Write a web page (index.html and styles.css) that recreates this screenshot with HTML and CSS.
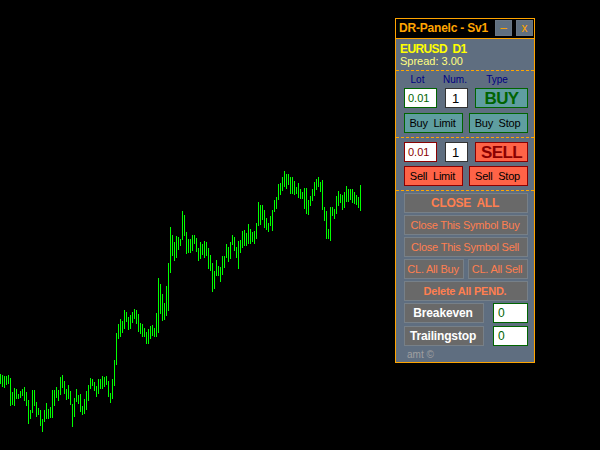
FILE: index.html
```html
<!DOCTYPE html>
<html lang="en">
<head>
<meta charset="utf-8">
<title>DR-Panelc</title>
<link rel="stylesheet" href="styles.css">
</head>
<body>
<svg class="chart" width="600" height="450" viewBox="0 0 600 450" aria-hidden="true">
<path class="bars" d="M.5 374V384M2.5 375V387M4.5 376V388M6.5 376V385M8.5 375V384M10.5 378V406M12.5 392V405M14.5 388V406M16.5 389V399M18.5 394V399M20.5 391V398M22.5 389V396M24.5 387V401M26.5 392V406M28.5 400V424M30.5 410V419M32.5 390V413M34.5 390V406M36.5 402V417M38.5 408V415M40.5 410V426M42.5 419V432M44.5 410V422M46.5 403V419M48.5 409V419M50.5 407V418M52.5 390V418M54.5 390V406M56.5 387V398M58.5 390V401M60.5 377V395M62.5 375V388M64.5 381V394M66.5 389V400M68.5 385V399M70.5 391V405M72.5 404V427M74.5 398V417M76.5 389V402M78.5 395V404M80.5 394V412M82.5 406V415M84.5 399V414M86.5 391V410M88.5 385V401M90.5 378V389M92.5 379V386M94.5 382V391M96.5 386V397M98.5 379V394M100.5 379V389M102.5 376V389M104.5 377V387M106.5 376V385M108.5 381V397M110.5 393V403M112.5 379V399M114.5 360V386M116.5 333V365M118.5 324V339M120.5 319V337M122.5 321V333M124.5 310V329M126.5 312V322M128.5 317V330M130.5 315V329M132.5 312V323M134.5 309V319M136.5 310V324M138.5 314V332M140.5 323V334M142.5 324V337M144.5 328V337M146.5 332V344M148.5 329V344M150.5 326V339M152.5 325V336M154.5 328V337M156.5 313V337M158.5 278V333M160.5 284V314M162.5 294V321M164.5 303V320M166.5 286V316M168.5 263V311M170.5 227V273M172.5 235V256M174.5 242V261M176.5 236V258M178.5 237V250M180.5 239V246M182.5 211V240M184.5 215V236M186.5 232V254M188.5 239V253M190.5 239V253M192.5 235V251M194.5 235V244M196.5 238V252M198.5 248V261M200.5 242V259M202.5 244V255M204.5 241V258M206.5 242V256M208.5 248V269M210.5 255V271M212.5 263V292M214.5 271V289M216.5 260V276M218.5 266V276M220.5 267V282M222.5 256V275M224.5 256V268M226.5 244V258M228.5 247V262M230.5 242V259M232.5 235V245M234.5 237V251M236.5 247V258M238.5 241V269M240.5 240V253M242.5 231V248M244.5 230V246M246.5 233V246M248.5 224V244M250.5 229V244M252.5 232V242M254.5 231V244M256.5 223V239M258.5 202V226M260.5 205V225M262.5 205V220M264.5 210V228M266.5 218V230M268.5 223V232M270.5 216V226M272.5 210V231M274.5 200V212M276.5 197V209M278.5 184V200M280.5 183V195M282.5 177V191M284.5 171V187M286.5 174V189M288.5 174V185M290.5 177V194M292.5 177V194M294.5 181V195M296.5 187V194M298.5 183V198M300.5 189V199M302.5 192V199M304.5 188V209M306.5 188V214M308.5 200V215M310.5 196V206M312.5 189V201M314.5 182V196M316.5 179V190M318.5 177V187M320.5 182V192M322.5 180V210M324.5 207V221M326.5 211V239M328.5 229V239M330.5 207V241M332.5 207V216M334.5 209V219M336.5 196V214M338.5 191V206M340.5 194V203M342.5 195V210M344.5 192V208M346.5 186V202M348.5 189V202M350.5 189V200M352.5 189V203M354.5 192V204M356.5 195V205M358.5 197V208M360.5 185V211"/>
</svg>
<div class="panel">
  <div class="titlebar">
    <span class="title">DR-Panelc - Sv1</span>
    <button class="win-btn win-min">–</button>
    <button class="win-btn">x</button>
  </div>
  <div class="info">
    <div class="symbol">EURUSD&nbsp; D1</div>
    <div class="spread">Spread: 3.00</div>
  </div>
  <div class="section section-buy">
    <div class="labels">
      <span class="lbl lbl-lot">Lot</span>
      <span class="lbl lbl-num">Num.</span>
      <span class="lbl lbl-type">Type</span>
    </div>
    <div class="row">
      <div class="field field-lot lot-buy">0.01</div>
      <div class="field field-num num-buy">1</div>
      <button class="btn btn-main buy">BUY</button>
    </div>
    <div class="row row-pending">
      <button class="btn btn-half buy">Buy&nbsp; Limit</button>
      <button class="btn btn-half buy">Buy&nbsp; Stop</button>
    </div>
  </div>
  <div class="section section-sell">
    <div class="row">
      <div class="field field-lot lot-sell">0.01</div>
      <div class="field field-num num-sell">1</div>
      <button class="btn btn-main sell">SELL</button>
    </div>
    <div class="row row-pending-sell">
      <button class="btn btn-half sell">Sell&nbsp; Limit</button>
      <button class="btn btn-half sell">Sell&nbsp; Stop</button>
    </div>
  </div>
  <div class="section section-close">
    <button class="btn close close-all">CLOSE&nbsp; ALL</button>
    <button class="btn close">Close This Symbol Buy</button>
    <button class="btn close">Close This Symbol Sell</button>
    <div class="row row-cl">
      <button class="btn close">CL. All Buy</button>
      <button class="btn close">CL. All Sell</button>
    </div>
    <button class="btn close close-bold">Delete All PEND.</button>
    <div class="row row-stop">
      <button class="btn stop">Breakeven</button>
      <div class="field field-stop">0</div>
    </div>
    <div class="row row-stop row-trail">
      <button class="btn stop">Trailingstop</button>
      <div class="field field-stop">0</div>
    </div>
  </div>
  <div class="credit">amt ©</div>
</div>
</body>
</html>
```
FILE: styles.css
```css
* { box-sizing: border-box; }
html, body { margin: 0; padding: 0; background: #000; }
body { width: 600px; height: 450px; overflow: hidden; position: relative; font-family: "Liberation Sans", Arial, sans-serif; }
.chart { display: block; }
.bars { stroke: #00ff00; stroke-width: 1; fill: none; shape-rendering: crispEdges; }

.panel { position: absolute; left: 395px; top: 18px; width: 140px; height: 345px; background: #5f6e80; border: 1px solid #ffa500; }

.titlebar { height: 20px; display: flex; align-items: center; background: #000; border-bottom: 1px solid #ffa500; padding: 0 1px 1px 3px; }
.title { color: #ffa500; font-size: 12px; font-weight: bold; letter-spacing: -.2px; flex: 1; white-space: nowrap; }
.win-btn { width: 17px; height: 16px; margin: 0; padding: 0; background: #607080; border: 1px solid #6a7684; color: #ffa500; font: 12px "Liberation Sans", Arial, sans-serif; display: flex; align-items: center; justify-content: center; }
.win-min { margin-right: 4px; }

.info { height: 32px; padding: 3px 0 0 4px; border-bottom: 1px dashed #ffa500; }
.symbol { color: #ffff00; font-size: 12px; font-weight: bold; letter-spacing: -.6px; line-height: 14px; }
.spread { color: #ffff80; font-size: 11px; line-height: 12px; margin-top: -1px; }

.section { padding: 0 6px 0 8px; }
.section-buy { height: 67px; border-bottom: 1px dashed #ffa500; }
.section-sell { height: 53px; padding-top: 4px; border-bottom: 1px dashed #ffa500; }
.section-close { padding-top: 2px; display: flex; flex-direction: column; gap: 2px; }

.labels { height: 17px; display: flex; align-items: center; padding-bottom: 1px; font-size: 10px; color: #000080; }
.lbl { display: block; text-align: center; }
.lbl-lot { width: 27px; }
.lbl-num { width: 24px; margin-left: 12px; }
.lbl-type { width: 30px; margin-left: 15px; }

.row { display: flex; align-items: stretch; }
.row-pending { margin-top: 5px; justify-content: space-between; }
.row-pending-sell { margin-top: 4px; justify-content: space-between; }
.row-cl { justify-content: space-between; }
.row-stop { justify-content: space-between; }
.row-trail { margin-top: 1px; }

.field { height: 20px; background: #fff; font-size: 12px; display: flex; align-items: center; padding-left: 4px; }
.field-lot { width: 33px; font-size: 11px; margin-right: 8px; padding-left: 3px; }
.field-num { width: 23px; margin-right: 7px; padding-left: 6px; font-size: 13px; color: #000; }
.lot-buy { border: 1px solid #006400; color: #006400; }
.num-buy { border: 1px solid #333; }
.lot-sell { border: 1px solid #8b0000; color: #8b0000; }
.num-sell { border: 1px solid #333; }
.field-stop { width: 35px; border: 1px solid #006400; color: #006400; }

.btn { display: block; height: 20px; margin: 0; padding: 0 2px 0 0; font-family: "Liberation Sans", Arial, sans-serif; font-size: 11px; letter-spacing: -.22px; white-space: nowrap; text-align: center; }
.btn-main { width: 53px; padding: 0; font-size: 17px; letter-spacing: -.6px; font-weight: bold; }
.btn-half { width: 59px; }
.buy { background: #5f9ea0; border: 1px solid #006400; color: #000; }
.btn-main.buy { color: #006400; }
.sell { background: #ff6347; border: 1px solid #8b0000; color: #000; }
.btn-main.sell { color: #8b0000; }

.close { background: #696969; border: 1px solid #778088; color: #ff7f50; width: 124px; }
.close-all { font-size: 12px; letter-spacing: -.3px; font-weight: bold; }
.close-bold { font-size: 11px; font-weight: bold; }
.row-cl .close { width: 60px; }
.stop { width: 80px; background: #696969; border: 1px solid #778088; color: #fff; font-size: 12px; letter-spacing: -.15px; font-weight: bold; }

.credit { position: absolute; left: 11px; top: 330px; font-size: 10px; color: #a0a0a0; }
```
